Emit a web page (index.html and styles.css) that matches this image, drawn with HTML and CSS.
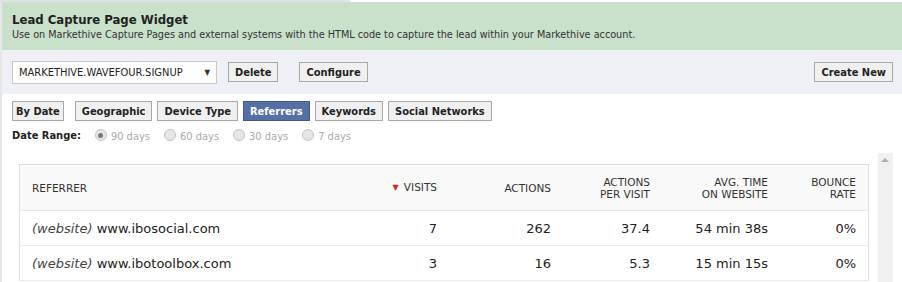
FILE: index.html
```html
<!DOCTYPE html>
<html lang="en">
<head>
    <meta charset="UTF-8">
    <title>Lead Capture Page Widget</title>
    <link rel="stylesheet" href="styles.css">
</head>
<body>

<div class="top-strip"></div>

<div class="widget">
    <!-- Шапка виджета -->
    <div class="widget-head">
        <h2>Lead Capture Page Widget</h2>
        <p>Use on Markethive Capture Pages and external systems with the HTML code to capture the lead within your Markethive account.</p>
    </div>

    <div class="toolbar">
        <div class="select">
            <span>MARKETHIVE.WAVEFOUR.SIGNUP</span>
            <span class="caret">&#9660;</span>
        </div>
        <button class="btn">Delete</button>
        <button class="btn btn-gap">Configure</button>
        <button class="btn btn-right">Create New</button>
    </div>

    <div class="stats">
        <div class="tabs">
            <button class="btn first">By Date</button>
            <button class="btn">Geographic</button>
            <button class="btn">Device Type</button>
            <button class="btn active">Referrers</button>
            <button class="btn">Keywords</button>
            <button class="btn">Social Networks</button>
        </div>

        <div class="range">
            <label class="range-title">Date Range:</label>
            <span class="radio checked"><i></i>90 days</span>
            <span class="radio"><i></i>60 days</span>
            <span class="radio"><i></i>30 days</span>
            <span class="radio"><i></i>7 days</span>
        </div>

        <div class="table-wrap">
            <table class="report">
                <thead>
                    <tr>
                        <th class="col-ref">Referrer</th>
                        <th class="col-visits"><span class="sort">&#9660;</span> Visits</th>
                        <th class="col-actions">Actions</th>
                        <th class="col-apv">Actions<br>per visit</th>
                        <th class="col-time">Avg. time<br>on website</th>
                        <th class="col-bounce">Bounce<br>rate</th>
                    </tr>
                </thead>
                <tbody>
                    <tr>
                        <td class="col-ref"><em>(website)</em> www.ibosocial.com</td>
                        <td>7</td>
                        <td>262</td>
                        <td>37.4</td>
                        <td>54 min 38s</td>
                        <td>0%</td>
                    </tr>
                    <tr>
                        <td class="col-ref"><em>(website)</em> www.ibotoolbox.com</td>
                        <td>3</td>
                        <td>16</td>
                        <td>5.3</td>
                        <td>15 min 15s</td>
                        <td>0%</td>
                    </tr>
                </tbody>
            </table>
            <div class="scrollbar"><span class="arrow"></span></div>
        </div>
    </div>
</div>

</body>
</html>
```

FILE: styles.css
```css
/* Основные стили */
body {
    margin: 0;
    font-family: "DejaVu Sans Condensed", "DejaVu Sans", sans-serif;
    color: #222;
    background: #fff;
    overflow: hidden;
}

.top-strip {
    width: 350px;
    height: 2px;
    background: #e2e2e2;
}

.widget {
    border-left: 2px solid #e6e6e6;
}

/* Шапка */
.widget-head {
    background: #c9e0cb;
    padding: 10px 10px 9px;
    height: 29px;
}
.widget-head h2 {
    margin: 0;
    font-size: 13px;
    font-weight: bold;
    color: #222;
    line-height: 16px;
}
.widget-head p {
    margin: 0;
    font-size: 10.75px;
    line-height: 14px;
    color: #333;
}

/* Панель с выбором */
.toolbar {
    display: flex;
    align-items: center;
    background: #eef0f5;
    height: 44px;
    padding: 0 9px 0 10px;
}
.select {
    display: flex;
    justify-content: space-between;
    align-items: center;
    width: 191px;
    height: 21px;
    padding: 0 6px;
    background: #fff;
    border: 1px solid #c8c8c8;
    font-size: 11px;
    color: #222;
}
.select .caret {
    font-size: 8px;
    color: #333;
}

.btn {
    font-family: "DejaVu Sans Condensed", "DejaVu Sans", sans-serif;
    font-size: 11px;
    font-weight: bold;
    color: #222;
    background: #f0f0f0;
    border: 1px solid #a8a8a8;
    padding: 0 6px;
    height: 20px;
    margin-left: 11px;
    cursor: pointer;
}
.btn-gap {
    margin-left: 21px;
}
.btn-right {
    margin-left: auto;
}

/* Статистика */
.stats {
    padding: 7px 0 0 10px;
}
.tabs {
    display: flex;
    gap: 5px;
}
.tabs .btn {
    margin: 0;
}
.tabs .btn.first {
    padding: 0 3px;
    margin-right: 6px;
}
.tabs .btn.active {
    background: #5670a6;
    border-color: #3f5a8f;
    color: #fff;
}

.range {
    display: flex;
    align-items: center;
    height: 22px;
    margin-top: 3px;
    font-size: 11px;
}
.range-title {
    font-weight: bold;
    margin-right: 14px;
}
.radio {
    display: flex;
    align-items: center;
    color: #aaa;
    font-size: 11px;
    margin-right: 14px;
    padding-top: 3px;
}
.radio i {
    width: 12px;
    height: 12px;
    border: 1px solid #c4c4c4;
    border-radius: 50%;
    background: #e6e6e6;
    margin-right: 4px;
    margin-top: -3px;
    box-sizing: border-box;
    position: relative;
}
.radio.checked i::after {
    content: "";
    position: absolute;
    left: 2.5px;
    top: 2.5px;
    width: 5px;
    height: 5px;
    border-radius: 50%;
    background: #777;
}

/* Таблица */
.table-wrap {
    display: flex;
    margin-top: 8px;
    padding-top: 10px;
}
.report {
    margin-left: 7px;
    width: 850px;
    table-layout: fixed;
    border-collapse: collapse;
    border: 1px solid #ddd;
    font-family: "DejaVu Sans", sans-serif;
    align-self: flex-start;
}
.report th {
    background: #f9f9f9;
    font-size: 10.5px;
    font-weight: normal;
    text-transform: uppercase;
    color: #333;
    text-align: right;
    height: 45px;
    line-height: 12px;
    padding: 0 12px;
    border-bottom: 1px solid #e6e6e6;
}
.report td {
    font-size: 13px;
    text-align: right;
    color: #222;
    height: 34px;
    padding: 0 12px;
    border-bottom: 1px solid #eaeaea;
}
.report .col-ref {
    text-align: left;
    width: 316px;
}
.report em {
    color: #444;
}
.sort {
    color: #d0302a;
    font-size: 8px;
    margin-right: 2px;
    vertical-align: 1px;
}
.col-visits { width: 65px; }
.col-actions { width: 90px; }
.col-apv { width: 75px; }
.col-time { width: 94px; }
.col-bounce { width: 64px; }

.scrollbar {
    width: 15px;
    height: 140px;
    background: #f0f0f0;
    margin-left: 9px;
    margin-top: -11px;
    position: relative;
}
.scrollbar .arrow {
    position: absolute;
    left: 3px;
    top: 5px;
    border-left: 4px solid transparent;
    border-right: 4px solid transparent;
    border-bottom: 4px solid #b0b0b0;
}
```
